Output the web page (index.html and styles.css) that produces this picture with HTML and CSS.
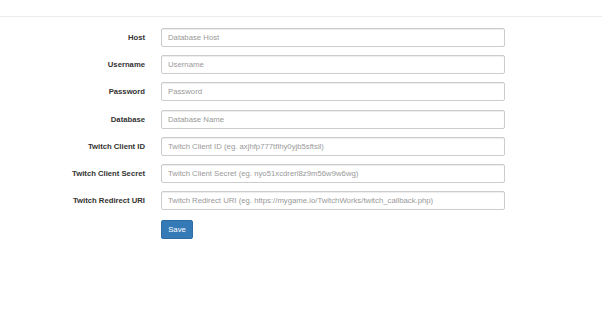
FILE: index.html
```html
<!DOCTYPE html>
<html lang="en">
<head>
    <meta charset="UTF-8">
    <meta name="viewport" content="width=device-width, initial-scale=1.0">
    <title>TwitchWorks Setup</title>
    <link rel="stylesheet" href="styles.css">
</head>
<body>
    <div class="topbar"></div>

    <form class="setup-form">
        <label for="host">Host</label>
        <input type="text" id="host" placeholder="Database Host">

        <label for="username">Username</label>
        <input type="text" id="username" placeholder="Username">

        <label for="password">Password</label>
        <input type="password" id="password" placeholder="Password">

        <label for="database">Database</label>
        <input type="text" id="database" placeholder="Database Name">

        <label for="clientId">Twitch Client ID</label>
        <input type="text" id="clientId" placeholder="Twitch Client ID (eg. axjhfp777tflhy0yjb5sftsil)">

        <label for="clientSecret">Twitch Client Secret</label>
        <input type="text" id="clientSecret" placeholder="Twitch Client Secret (eg. nyo51xcdrerl8z9m56w9w6wg)">

        <label for="redirectUri">Twitch Redirect URI</label>
        <input type="text" id="redirectUri" placeholder="Twitch Redirect URI (eg. https://mygame.io/TwitchWorks/twitch_callback.php)">

        <div class="actions">
            <button type="submit" class="save-btn">Save</button>
        </div>
    </form>
</body>
</html>
```

FILE: styles.css
```css
body {
    font-family: 'Liberation Sans', Arial, Helvetica, sans-serif;
    margin: 0;
    background-color: #fff;
    color: #333;
}
.topbar {
    height: 16px;
    border-bottom: 1px solid #ececec;
}
.setup-form {
    display: grid;
    grid-template-columns: 145px 344px;
    column-gap: 16px;
    row-gap: 8.2px;
    margin-top: 11px;
}
label {
    font-size: 7.7px;
    font-weight: bold;
    text-align: right;
    line-height: 19px;
    height: 19px;
}
input[type="text"], input[type="password"] {
    height: 19px;
    padding: 0 7px 0 6px;
    border: 1px solid #ccc;
    border-radius: 2px;
    box-sizing: border-box;
    font-family: inherit;
    font-size: 7.75px;
    color: #555;
    box-shadow: inset 0 1px 1px rgba(0, 0, 0, 0.075);
}
input::placeholder {
    color: #999;
}
.actions {
    grid-column: 2;
}
.save-btn {
    background-color: #337ab7;
    color: white;
    border: 1px solid #2e6da4;
    border-radius: 2px;
    height: 19px;
    width: 32px;
    padding: 0;
    font-family: inherit;
    font-size: 7.75px;
    cursor: pointer;
}
.save-btn:hover {
    background-color: #286090;
}
```
